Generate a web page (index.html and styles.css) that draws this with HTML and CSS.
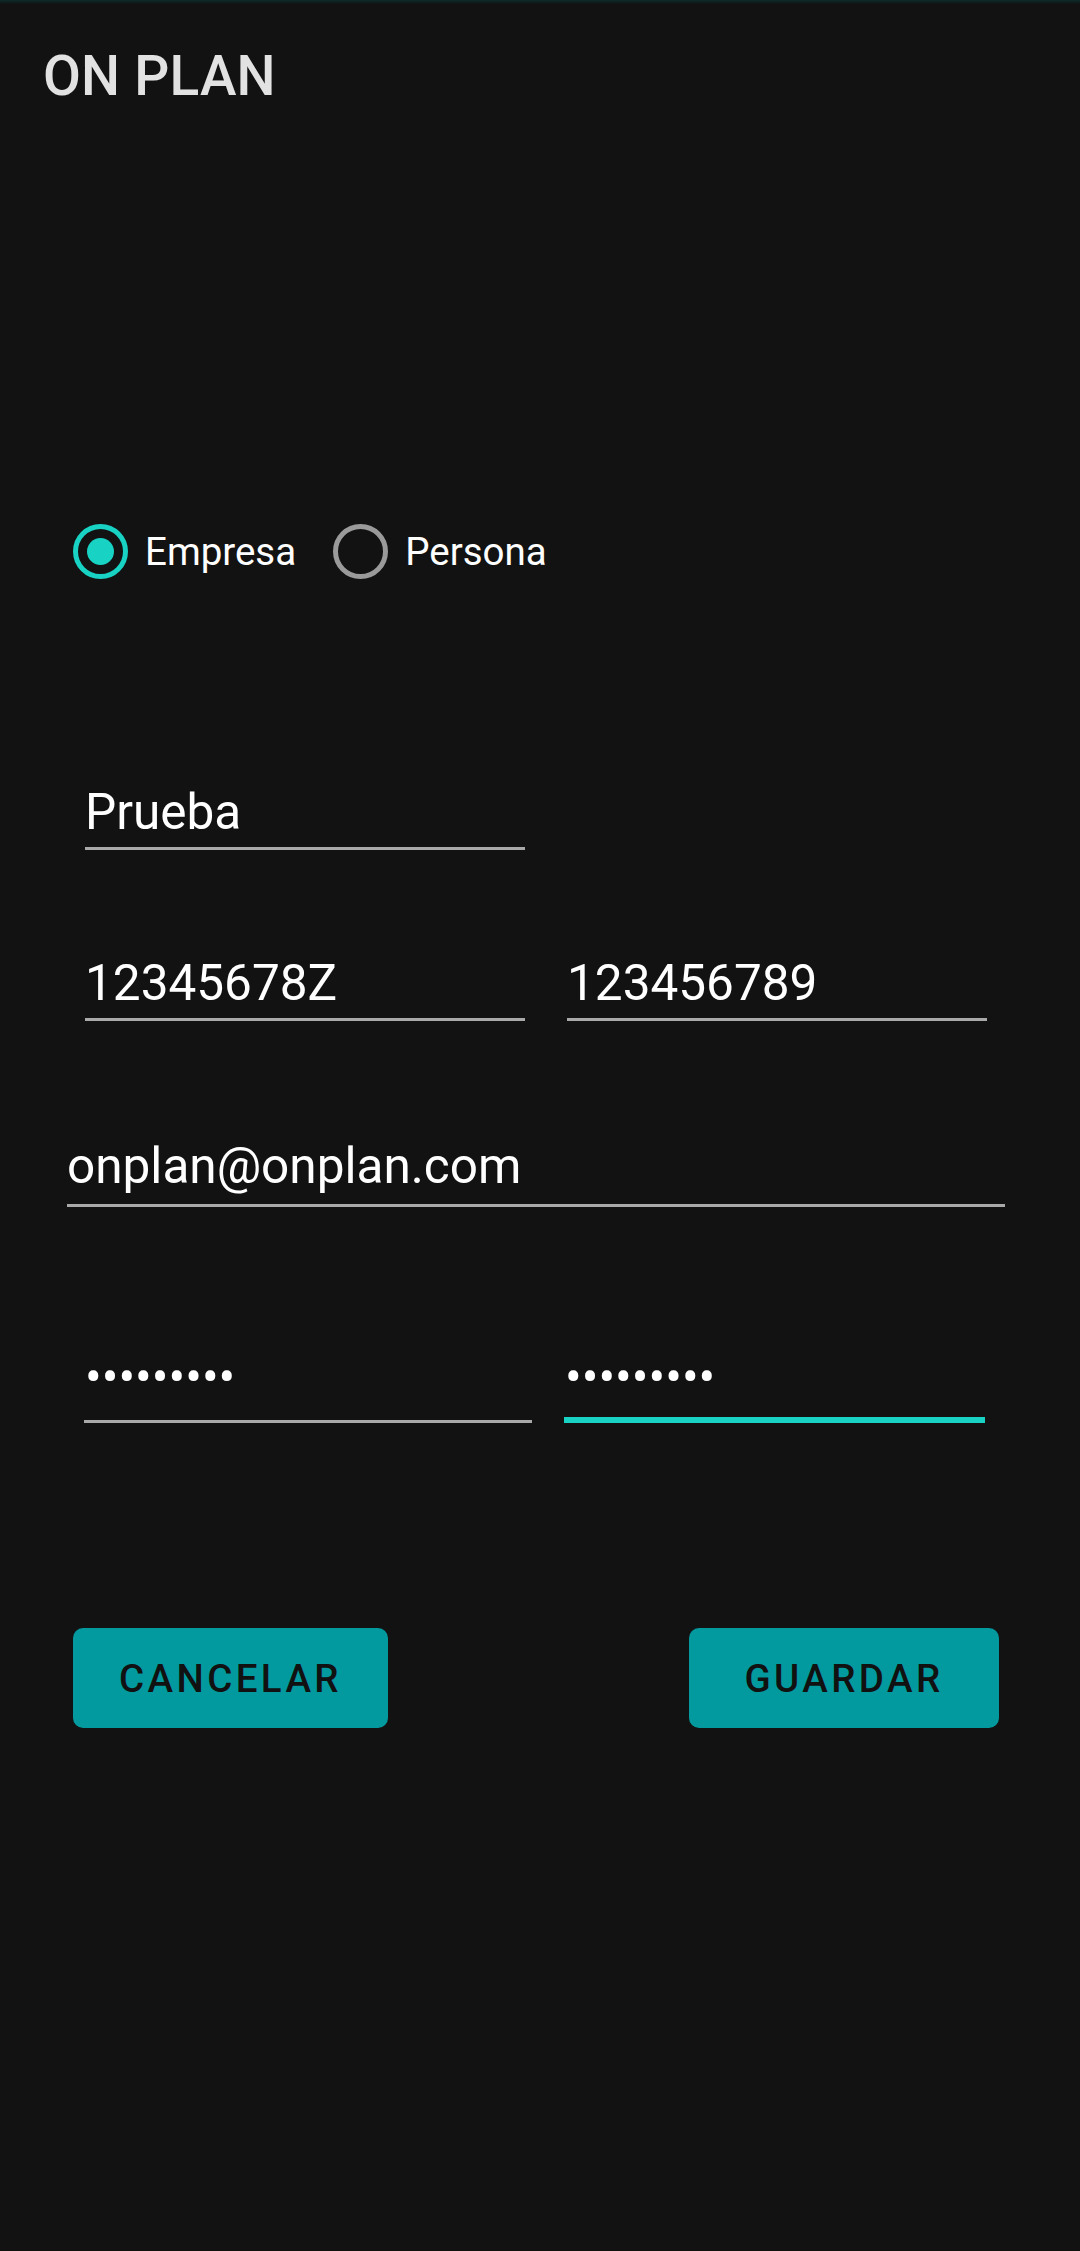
FILE: index.html
```html
<!DOCTYPE html>
<html lang="es">
<head>
<meta charset="utf-8">
<title>ON PLAN</title>
<link rel="stylesheet" href="styles.css">
</head>
<body>
<div class="screen">
  <div class="topline"></div>
  <header class="appbar"><h1 class="title">ON PLAN</h1></header>

  <div class="radios">
    <label class="radio">
      <span class="circle checked"><span class="dot"></span></span>
      <span class="rlabel">Empresa</span>
    </label>
    <label class="radio second">
      <span class="circle"></span>
      <span class="rlabel">Persona</span>
    </label>
  </div>

  <div class="row row-name">
    <div class="field f-name"><span class="val">Prueba</span></div>
  </div>

  <div class="row row-ids">
    <div class="field f-nif"><span class="val">12345678Z</span></div>
    <div class="field f-phone"><span class="val">123456789</span></div>
  </div>

  <div class="row row-email">
    <div class="field f-email"><span class="val">onplan@onplan.com</span></div>
  </div>

  <div class="row row-pass">
    <div class="field pass f-pass1"><span class="val dots">•••••••••</span></div>
    <div class="field pass focused f-pass2"><span class="val dots">•••••••••</span></div>
  </div>

  <div class="buttons">
    <button class="btn btn-cancel">CANCELAR</button>
    <button class="btn btn-save">GUARDAR</button>
  </div>
</div>
</body>
</html>
```

FILE: styles.css
```css
html, body {
  margin: 0;
  padding: 0;
  background: #121212;
}
.screen {
  width: 1080px;
  height: 2251px;
  background: #121212;
  font-family: Roboto, "Noto Sans", sans-serif;
  color: #ffffff;
  overflow: hidden;
}
.topline {
  height: 4px;
  background: linear-gradient(#0b2b2a, #121212);
}
.appbar {
  padding: 40px 0 0 43px;
}
.title {
  margin: 0;
  font-size: 55px;
  font-weight: 500;
  line-height: 64px;
  color: #e2e2e2;
  letter-spacing: 0.2px;
}

.radios {
  display: flex;
  align-items: center;
  margin-top: 416px;
  padding-left: 73px;
}
.radio {
  display: flex;
  align-items: center;
  gap: 17px;
}
.radio.second {
  margin-left: 37px;
}
.circle {
  box-sizing: border-box;
  width: 55px;
  height: 55px;
  border-radius: 50%;
  border: 5.5px solid #9a9a9a;
  display: flex;
  align-items: center;
  justify-content: center;
}
.circle.checked {
  border-color: #18d3c3;
}
.dot {
  width: 27px;
  height: 27px;
  border-radius: 50%;
  background: #18d3c3;
}
.rlabel {
  font-size: 38.5px;
  line-height: 45px;
  color: #ffffff;
}

.row {
  display: flex;
}
.field {
  box-sizing: border-box;
  border-bottom: 3px solid #a9a9a9;
  padding-bottom: 6px;
}
.val {
  display: block;
  font-size: 49.5px;
  line-height: 58px;
  color: #ffffff;
  white-space: nowrap;
}
.row-name {
  margin-top: 204px;
  padding-left: 85px;
}
.f-name { width: 440px; }

.row-ids {
  margin-top: 104px;
  padding-left: 85px;
  gap: 42px;
}
.f-nif { width: 440px; }
.f-phone { width: 420px; }

.row-email {
  margin-top: 116px;
  padding-left: 67px;
}
.f-email {
  width: 938px;
  padding-bottom: 9px;
}

.row-pass {
  margin-top: 132px;
  padding-left: 84px;
  gap: 32px;
}
.field.pass {
  padding-top: 9px;
  padding-bottom: 12px;
}
.f-pass1 { width: 448px; }
.f-pass2 { width: 421px; }
.field.focused {
  border-bottom: 6px solid #18d3c3;
  padding-bottom: 11px;
}
.dots {
  padding-left: 1px;
  letter-spacing: 0px;
}

.buttons {
  display: flex;
  justify-content: space-between;
  margin-top: 205px;
  padding: 0 81px 0 73px;
}
.btn {
  height: 100px;
  border: none;
  border-radius: 10px;
  background: #029a9f;
  color: #111111;
  font-family: Roboto, "Noto Sans", sans-serif;
  font-size: 38.5px;
  font-weight: 500;
  letter-spacing: 3.4px;
  padding: 0;
}
.btn-cancel { width: 315px; }
.btn-save { width: 310px; }
```
